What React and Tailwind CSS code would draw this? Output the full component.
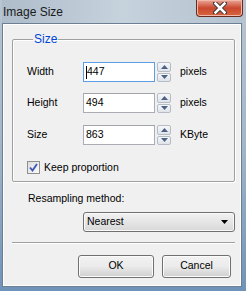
const Spin = () => (
  <div className="flex flex-col gap-[1px] w-[14px] h-[20px]">
    {["up", "down"].map((d) => (
      <div
        key={d}
        className="flex-1 flex items-center justify-center border border-[#b5bcc6] rounded-[2px] bg-gradient-to-b from-[#f5f7f9] to-[#dfe4ea]"
      >
        <svg width="7" height="4" viewBox="0 0 7 4">
          {d === "up" ? (
            <path d="M0 4 L3.5 0 L7 4 Z" fill="#4d6185" />
          ) : (
            <path d="M0 0 L3.5 4 L7 0 Z" fill="#4d6185" />
          )}
        </svg>
      </div>
    ))}
  </div>
);

const Field = ({ label, value, unit, focused, className = "" }) => (
  <div className={"flex items-center h-[20px] " + className}>
    <span className="w-[56px]">{label}</span>
    <div
      className={
        "w-[72px] h-[20px] bg-white border flex items-center pl-[2px] " +
        (focused ? "border-[#5c9ee6]" : "border-[#abadb3] border-t-[#a0a3aa]")
      }
    >
      {focused && <span className="w-[1px] h-[13px] bg-black" />}
      <span>{value}</span>
    </div>
    <div className="ml-[2px]">
      <Spin />
    </div>
    <span className="ml-[9px]">{unit}</span>
  </div>
);

const Btn = ({ children, className }) => (
  <button
    className={
      "h-[23px] rounded-[3px] border border-[#707070] bg-gradient-to-b from-[#f2f2f2] via-[#ebebeb] to-[#cfcfcf] shadow-[inset_0_0_0_1px_#fcfcfc] text-black " +
      className
    }
  >
    {children}
  </button>
);

export default function App() {
  return (
    <div
      className="w-[246px] h-[291px] flex flex-col pl-[2px] pr-[4px] pb-[4px] bg-gradient-to-b from-[#b9c5d1] via-[#a3b6c8] to-[#6f93b8] text-black text-[10.5px]"
      style={{ fontFamily: '"Liberation Sans", Arial, sans-serif' }}
    >
      <div className="h-[23px] flex items-start justify-between bg-gradient-to-r from-[#aebccb] via-[#c6d2dc] to-[#b4c3d0]">
        <span className="text-[12px] text-[#1a1a1a] pl-[1px] pt-[3px]">Image Size</span>
        <div className="w-[47px] h-[17px] -mr-[1px] rounded-b-[4px] border border-t-0 border-[#6b2a1e] bg-gradient-to-b from-[#e9a596] via-[#c9472e] to-[#d8653f] flex items-center justify-center shadow-[inset_0_0_0_1px_#f0b8a8]">
          <svg width="14" height="12" viewBox="0 0 14 12">
            <path d="M2 1 L12 11 M12 1 L2 11" stroke="#3a3a3a" strokeWidth="4.5" strokeLinecap="square" />
            <path d="M2.5 1.5 L11.5 10.5 M11.5 1.5 L2.5 10.5" stroke="#ffffff" strokeWidth="2.5" strokeLinecap="square" />
          </svg>
        </div>
      </div>

      <div className="flex-1 border border-[#6d7f92] bg-[#f0f0f0] shadow-[inset_0_0_0_1px_#ffffff] flex flex-col">
        <fieldset className="mt-[8px] ml-[9px] mr-[6px] border border-[#a0a0a0] shadow-[inset_1px_1px_0_#ffffff,1px_1px_0_#ffffff] px-[14px] pb-[5px] rounded-[2px]">
          <legend className="ml-[6px] px-[1px] text-[#0046d5] text-[12px] leading-[14px]">Size</legend>
          <div className="flex flex-col mt-[16px]">
            <Field label="Width" value="447" unit="pixels" focused />
            <Field label="Height" value="494" unit="pixels" className="mt-[11px]" />
            <Field label="Size" value="863" unit="KByte" className="mt-[12px]" />
          </div>
          <div className="flex items-center mt-[15px]">
            <div className="w-[13px] h-[13px] border border-[#8f8f8f] bg-gradient-to-br from-[#dcdcdc] to-[#fbfbfb] flex items-center justify-center">
              <svg width="9" height="9" viewBox="0 0 9 9">
                <path d="M1 4.5 L3.5 7.5 L8 1" stroke="#3b54b8" strokeWidth="1.8" fill="none" />
              </svg>
            </div>
            <span className="ml-[4px]">Keep proportion</span>
          </div>
        </fieldset>

        <div className="ml-[25px] mt-[9px]">Resampling method:</div>

        <div className="ml-[80px] mr-[6px] mt-[5px] h-[20px] rounded-[3px] border border-[#707070] bg-gradient-to-b from-[#f2f2f2] to-[#d8d8d8] shadow-[inset_0_0_0_1px_#fafafa] flex items-center justify-between pl-[3px] pr-[6px]">
          <span>Nearest</span>
          <svg width="7" height="4" viewBox="0 0 7 4">
            <path d="M0 0 L7 0 L3.5 4 Z" fill="#000" />
          </svg>
        </div>

        <div className="ml-[9px] mr-[6px] mt-[10px] h-[2px] border-t border-[#a0a0a0] border-b border-b-white" />

        <div className="flex justify-end gap-[8px] mr-[10px] mt-[11px]">
          <Btn className="w-[76px]">OK</Btn>
          <Btn className="w-[69px]">Cancel</Btn>
        </div>
      </div>
    </div>
  );
}
